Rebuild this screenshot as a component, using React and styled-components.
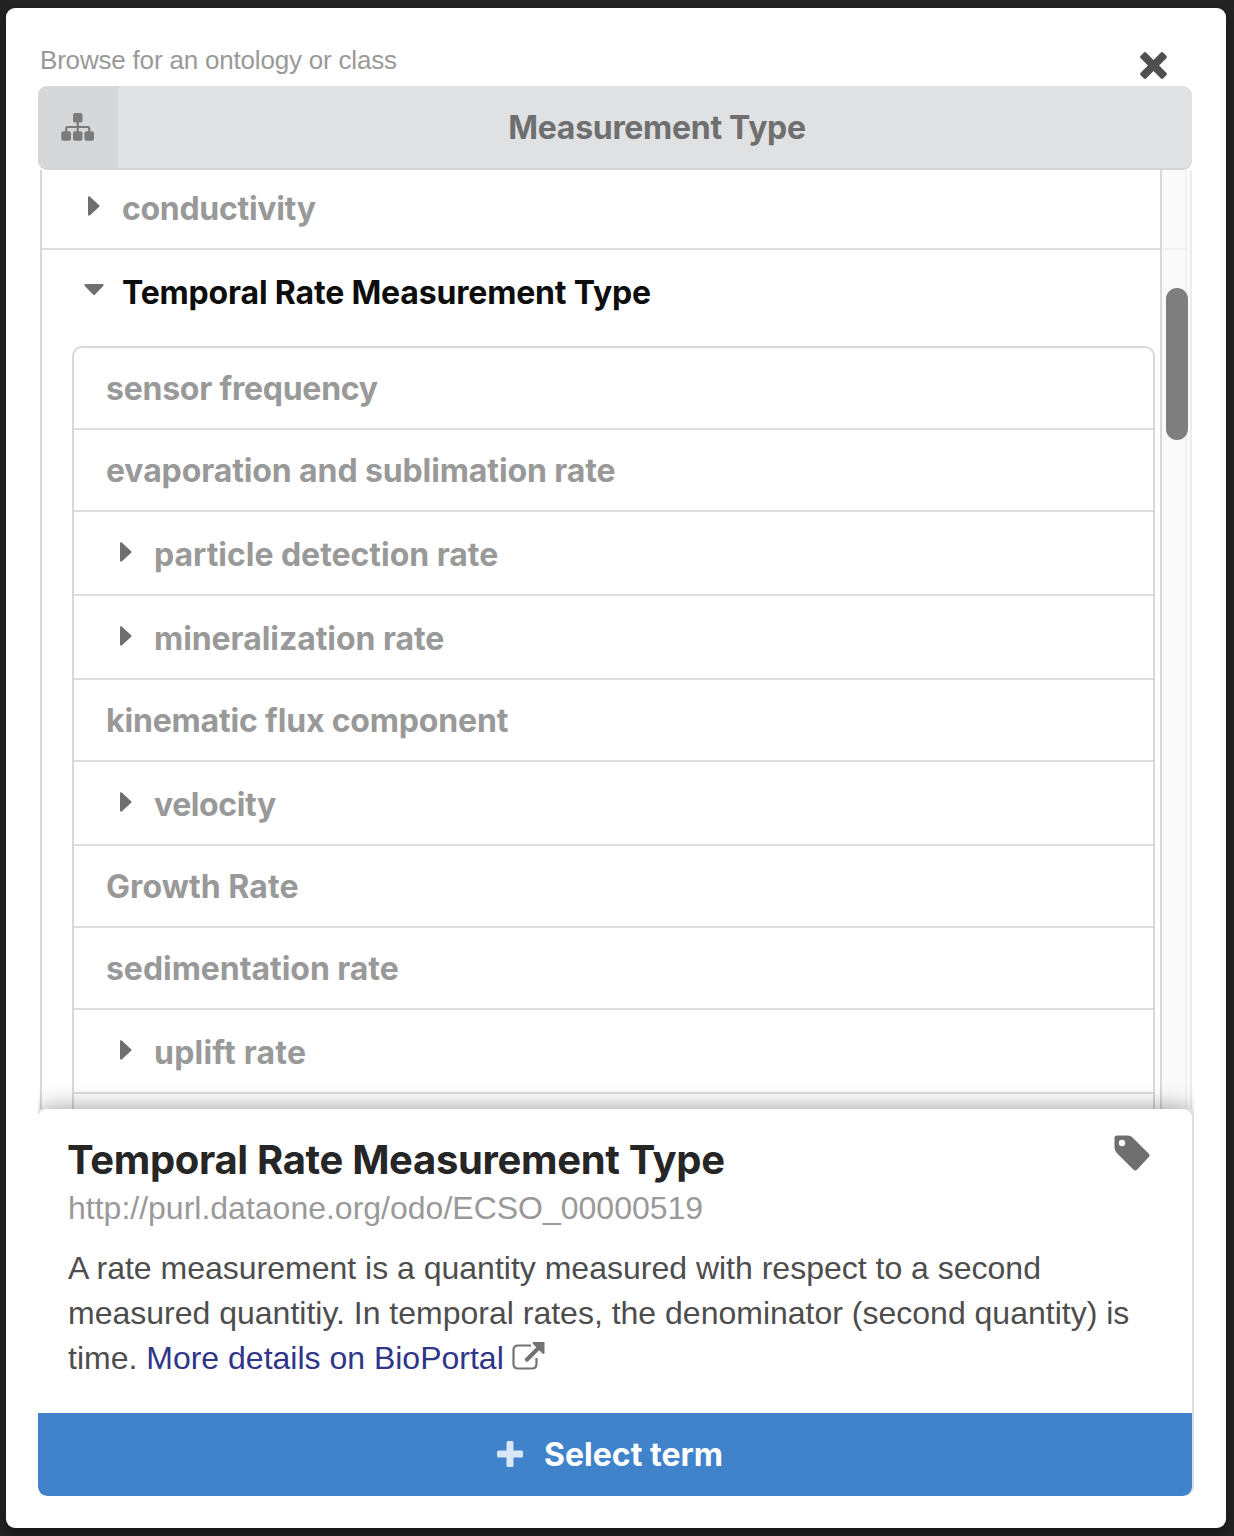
import React from "react";
import styled, { createGlobalStyle } from "styled-components";

const GlobalStyle = createGlobalStyle`
  * { box-sizing: border-box; }
  body {
    margin: 0;
    background: #222;
    font-family: "Liberation Sans", Arial, sans-serif;
  }
`;

const Page = styled.main`
  height: 1536px;
  padding: 8px 8px 8px 6px;
  background: #222;
  overflow: hidden;
`;

const Modal = styled.section`
  height: 1520px;
  padding: 30px 34px 32px 32px;
  display: flex;
  flex-direction: column;
  background: #fff;
  border-radius: 9px;
  box-shadow: 0 6px 12px rgba(0, 0, 0, 0.3);
`;

const TopBar = styled.div`
  height: 48px;
  flex: none;
  display: flex;
  justify-content: space-between;
  padding: 0 25px 0 2px;
`;

const Hint = styled.label`
  font-size: 26px;
  line-height: 44px;
  color: #999;
  white-space: nowrap;
  letter-spacing: -0.19px;
`;

const CloseButton = styled.button`
  width: 27px;
  height: 27px;
  margin-top: 13.5px;
  padding: 0;
  border: 0;
  background: none;
  color: #4f4f4f;
`;

const Icon = styled.svg`
  display: block;
  width: ${(p) => p.$w}px;
  height: ${(p) => p.$h}px;
  fill: currentColor;
`;

const Heading = styled.header`
  height: 84px;
  flex: none;
  display: flex;
  background: #dfe1e3;
  border-bottom: 2px solid #d5d5d5;
  border-radius: 9px;
  overflow: hidden;
`;

const TreeButton = styled.div`
  width: 80px;
  display: grid;
  place-items: center;
  padding-right: 1px;
  background: #d5d7d9;
  color: #7b7b7b;
`;

const HeadingText = styled.h2`
  flex: 1;
  margin: 0;
  padding-left: 4px;
  text-align: center;
  font: 700 32px/84px Inter, sans-serif;
  letter-spacing: -0.3px;
  color: #6f6f6f;
`;

const Viewport = styled.div`
  height: 939px;
  flex: none;
  display: flex;
  padding-left: 2px;
  overflow: hidden;
`;

const Tree = styled.div`
  width: 1122px;
  flex: none;
  border: solid #d8d8d8;
  border-width: 0 2px;
`;

const Track = styled.div`
  width: 30px;
  height: 939px;
  background: #fafafa;
  border-right: 2px solid #ececec;
  padding-right: 3px;
`;

const TrackInner = styled.div`
  height: 939px;
  padding-top: 78px;
  border-right: 2px solid #f0f0f0;
`;

const TrackLine = styled.div`
  height: 2px;
  background: #f0f0f0;
`;

const Thumb = styled.div`
  width: 22px;
  height: 152px;
  margin: 38px 0 0 4px;
  border-radius: 11px;
  background: #7e7e7e;
`;

const Row = styled.div`
  height: ${(p) => p.$height}px;
  display: flex;
  align-items: flex-start;
  padding: ${(p) => p.$top}px 0 0 ${(p) => p.$left}px;
  border-bottom: ${(p) => (p.$open ? 0 : 2)}px solid #ddd;
  color: ${(p) => (p.$open ? "#0d0d0d" : "#999")};
  font: 700 32px/40px Inter, sans-serif;
  letter-spacing: ${(p) => p.$track}px;
  white-space: nowrap;
`;

const Caret = styled.span`
  width: ${(p) => p.$w}px;
  height: 34px;
  display: grid;
  place-items: center start;
  flex: none;
  color: #6f6f6f;
`;

const Branch = styled.div`
  width: 1083px;
  margin-left: 30px;
  border: 2px solid #d8d8d8;
  border-bottom: 0;
  border-radius: 10px 10px 0 0;
  height: 763px;
`;

const Details = styled.article`
  height: 387px;
  flex: none;
  display: flex;
  flex-direction: column;
  background: #fff;
  border-radius: 9px;
  box-shadow: 2px 0 0 #ddd, 0 0 24px rgba(0, 0, 0, 0.42);
  clip-path: inset(-40px -2px 0 0 round 0 0 11px 9px);
  position: relative;
`;

const DetailsBody = styled.div`
  height: 304px;
  padding: 26px 40px 0 30px;
  background: #fff;
  border-radius: 9px 9px 0 0;
`;

const TitleRow = styled.div`
  display: flex;
  justify-content: space-between;
  padding-right: 2px;
`;

const TermTitle = styled.h3`
  margin: 0 0 0 -1px;
  font: 700 40px/50px Inter, sans-serif;
  letter-spacing: -0.33px;
  color: #262626;
  white-space: nowrap;
`;

const Tag = styled.span`
  color: #6f6f6f;
`;

const Uri = styled.div`
  font-size: 32px;
  line-height: 46px;
  color: #999;
`;

const Description = styled.p`
  margin: 15px 0 0;
  font-size: 32px;
  line-height: 45px;
  color: #4d4d4d;
`;

const Line = styled.span`
  display: flex;
  white-space: pre;
`;

const Link = styled.a`
  color: #2f3589;
`;

const LinkIcon = styled.span`
  margin: 6px 0 0 8px;
  color: #737373;
`;

const SelectButton = styled.button`
  height: 83px;
  display: flex;
  align-items: center;
  justify-content: center;
  gap: 21px;
  padding: 0 10px 0 0;
  border: 0;
  border-radius: 0 0 9px 9px;
  background: #4183cb;
  color: #fff;
  font: 700 32px/40px Inter, sans-serif;
`;

const Plus = styled.span`
  padding-bottom: 2px;
  color: #d9e6f5;
`;

const children = [
  { label: "sensor frequency", h: 82, track: -0.24 },
  { label: "evaporation and sublimation rate", h: 82, track: -0.11 },
  { label: "particle detection rate", h: 84, track: -0.03, caret: true },
  { label: "mineralization rate", h: 84, track: -0.06, caret: true },
  { label: "kinematic flux component", h: 82, track: -0.17 },
  { label: "velocity", h: 84, track: -0.42, caret: true },
  { label: "Growth Rate", h: 82, track: 0.06 },
  { label: "sedimentation rate", h: 82, track: -0.05 },
  { label: "uplift rate", h: 84, track: 0.22, caret: true },
];

const CaretRight = () => (
  <Icon $w={12} $h={20} viewBox="0 0 12 20">
    <path d="M0 1.5C0 .3 1.2 0 2 .8L11.200 9.200Q12 10 11.200 10.800L2 19.200C1.200 20 0 19.700 0 18.500Z" />
  </Icon>
);

const CaretDown = () => (
  <Icon $w={20} $h={12} viewBox="0 0 20 12">
    <path d="M1.500 0H18.500C19.700 0 20 1.200 19.200 2L10.800 10.800Q10 11.600 9.200 10.800L.8 2C0 1.200.3 0 1.500 0Z" />
  </Icon>
);

export default function App() {
  return (
    <Page>
      <GlobalStyle />
      <Modal>
        <TopBar>
          <Hint>Browse for an ontology or class</Hint>
          <CloseButton aria-label="Close">
            <Icon $w={27} $h={27} viewBox="0 0 27 27">
              <path d="M6.300 .7L13.500 7.900 20.700 .7Q22 -.5 23.300 .7L26.300 3.700Q27.500 5 26.300 6.300L19.100 13.500 26.300 20.700Q27.500 22 26.300 23.300L23.300 26.300Q22 27.500 20.700 26.300L13.500 19.100 6.300 26.300Q5 27.500 3.700 26.300L.7 23.300Q-.5 22 .7 20.700L7.900 13.500 .7 6.300Q-.5 5 .7 3.700L3.700 .7Q5 -.5 6.300 .7Z" />
            </Icon>
          </CloseButton>
        </TopBar>
        <Heading>
          <TreeButton>
            <Icon $w={34} $h={28} viewBox="0 0 34 28">
              <rect x="12" y="0" width="9.500" height="9.500" rx="2" />
              <rect x="0.300" y="18.300" width="9.700" height="9.500" rx="2" />
              <rect x="12" y="18.300" width="9.500" height="9.500" rx="2" />
              <rect x="23.500" y="18.300" width="9.500" height="9.500" rx="2" />
              <path
                d="M16.750 8V20M5.200 20V15.500Q5.200 14 6.700 14H26.800Q28.300 14 28.300 15.500V20"
                fill="none"
                stroke="currentColor"
                strokeWidth="2.200"
              />
            </Icon>
          </TreeButton>
          <HeadingText>Measurement Type</HeadingText>
        </Heading>
        <Viewport>
          <Tree>
            <Row $height={80} $top={19} $left={46} $track={-0.3}>
              <Caret $w={34}>
                <CaretRight />
              </Caret>
              conductivity
            </Row>
            <Row $height={96} $top={23} $left={42} $track={-0.17} $open>
              <Caret $w={38}>
                <CaretDown />
              </Caret>
              Temporal Rate Measurement Type
            </Row>
            <Branch>
              {children.map((c) => (
                <Row
                  key={c.label}
                  $height={c.h}
                  $top={c.caret ? 23 : 21}
                  $left={c.caret ? 46 : 32}
                  $track={c.track}
                >
                  {c.caret && (
                    <Caret $w={34}>
                      <CaretRight />
                    </Caret>
                  )}
                  {c.label}
                </Row>
              ))}
            </Branch>
          </Tree>
          <Track>
            <TrackInner>
              <TrackLine />
              <Thumb />
            </TrackInner>
          </Track>
        </Viewport>
        <Details>
          <DetailsBody>
            <TitleRow>
              <TermTitle>Temporal Rate Measurement Type</TermTitle>
              <Tag>
                <Icon $w={36} $h={36} viewBox="0 0 36 36">
                  <path
                    fillRule="evenodd"
                    d="M3 .5H13.500Q16.500 .5 18.800 2.800L34.800 18.800Q36.200 20.500 34.800 22L23 34.800Q21.200 36.300 19.600 34.800L3.200 18.500Q.5 15.700 .5 12.500V3Q.5 .5 3 .5ZM8 4.800A3.200 3.200 0 1 0 8 11.200A3.200 3.200 0 1 0 8 4.800Z"
                  />
                </Icon>
              </Tag>
            </TitleRow>
            <Uri>http://purl.dataone.org/odo/ECSO_00000519</Uri>
            <Description>
              <Line>A rate measurement is a quantity measured with respect to a second</Line>
              <Line>measured quantitiy. In temporal rates, the denominator (second quantity) is</Line>
              <Line>
                time. <Link>More details on BioPortal</Link>
                <LinkIcon>
                  <Icon $w={33} $h={28} viewBox="0 0 33 28">
                    <path
                      d="M19 3.500H6Q1.500 3.500 1.500 8V22Q1.500 26.500 6 26.500H20Q24.500 26.500 24.500 22V16"
                      fill="none"
                      stroke="currentColor"
                      strokeWidth="2.200"
                    />
                    <path d="M21.500 0H32.500V11Q32 12.500 30.500 11.500L27.200 8.200 16 19.400Q15 20.200 14 19.400L13.100 18.500Q12.300 17.500 13.100 16.500L24.300 5.300 21 2Q20 .5 21.500 0Z" />
                  </Icon>
                </LinkIcon>
              </Line>
            </Description>
          </DetailsBody>
          <SelectButton>
            <Plus>
              <Icon $w={26} $h={26} viewBox="0 0 26 26">
                <path d="M11 0H15Q16.500 0 16.500 1.500V9.500H24.500Q26 9.500 26 11V15Q26 16.500 24.500 16.500H16.500V24.500Q16.500 26 15 26H11Q9.500 26 9.500 24.500V16.500H1.500Q0 16.500 0 15V11Q0 9.500 1.500 9.500H9.500V1.500Q9.500 0 11 0Z" />
              </Icon>
            </Plus>
            Select term
          </SelectButton>
        </Details>
      </Modal>
    </Page>
  );
}
